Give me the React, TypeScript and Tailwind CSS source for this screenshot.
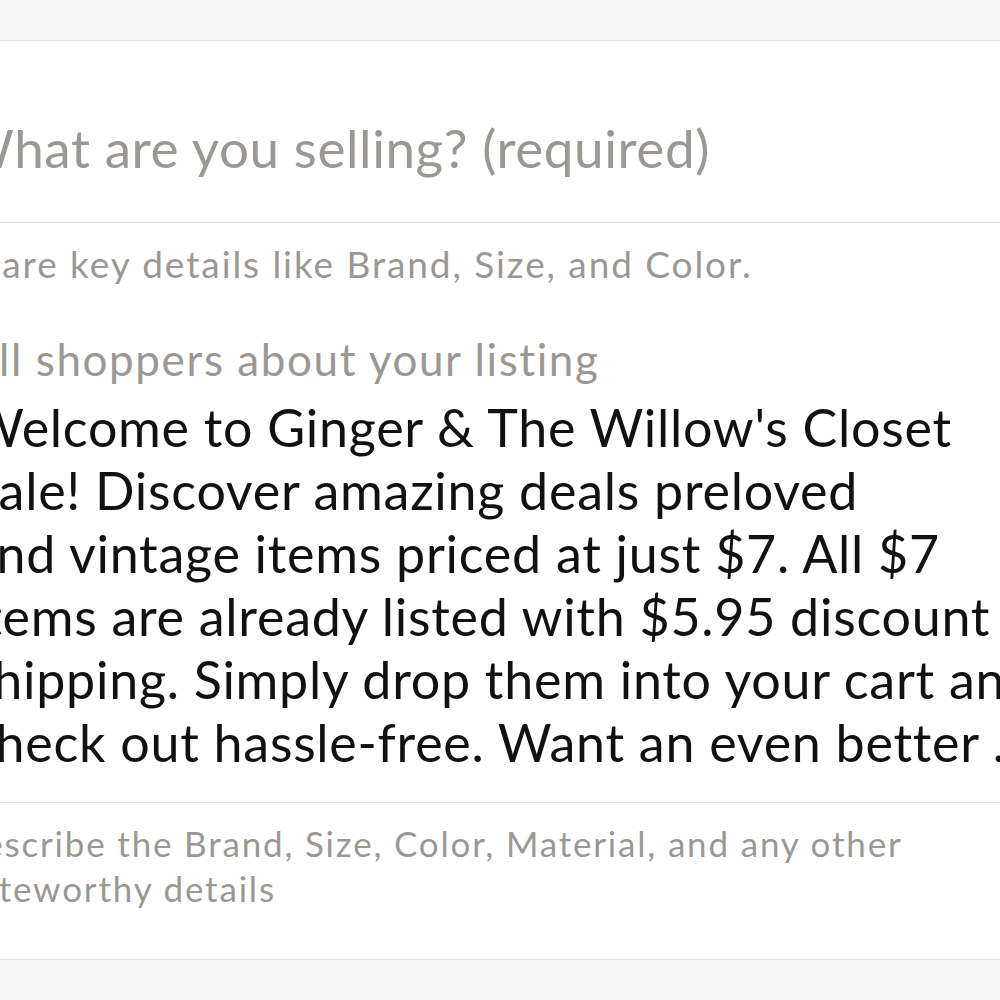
import React from "react";

const bodyLines = [
  "Welcome to Ginger & The Willow's Closet",
  "Sale! Discover amazing deals preloved",
  "and vintage items priced at just $7. All $7",
  "items are already listed with $5.95 discount",
  "shipping. Simply drop them into your cart and",
  "check out hassle-free. Want an even better ...",
];

export default function App() {
  return (
    <div
      className="w-[1000px] h-[1000px] overflow-hidden bg-white flex flex-col"
      style={{ fontFamily: "Lato, 'Noto Sans', sans-serif" }}
    >
      <div className="h-[41px] shrink-0 bg-[#f8f8f8] border-b border-[#e4e4e4]" />

      <div className="h-[182px] shrink-0 border-b border-[#e4e4e4] pt-[79px] overflow-hidden">
        <div className="-ml-[41px] whitespace-nowrap text-[53px] leading-[56px] text-[#9b9893] tracking-[0.011em]">
          What are you selling? (required)
        </div>
      </div>

      <div className="h-[580px] shrink-0 border-b border-[#e4e4e4] overflow-hidden pt-[21px]">
        <div className="-ml-[42px] whitespace-nowrap text-[37px] leading-[40px] text-[#9b9893] tracking-[0.052em]">
          Share key details like Brand, Size, and Color.
        </div>
        <div className="mt-[51px] -ml-[48px] whitespace-nowrap text-[44px] leading-[48px] text-[#9b9893] tracking-[0.036em]">
          Tell shoppers about your listing
        </div>
        <div className="mt-[13px] -ml-[30px] text-[52px] leading-[63px] text-[#111111] tracking-[0.014em]">
          {bodyLines.map((l) => (
            <div key={l} className="whitespace-nowrap">
              {l}
            </div>
          ))}
        </div>
      </div>

      <div className="h-[157px] shrink-0 border-b border-[#e4e4e4] overflow-hidden pt-[18px]">
        <div className="-ml-[44px] text-[35px] leading-[45px] text-[#9b9893] tracking-[0.052em]">
          <div className="whitespace-nowrap">
            Describe the Brand, Size, Color, Material, and any other
          </div>
          <div className="whitespace-nowrap">noteworthy details</div>
        </div>
      </div>

      <div className="flex-1 bg-[#f8f8f8]" />
    </div>
  );
}
